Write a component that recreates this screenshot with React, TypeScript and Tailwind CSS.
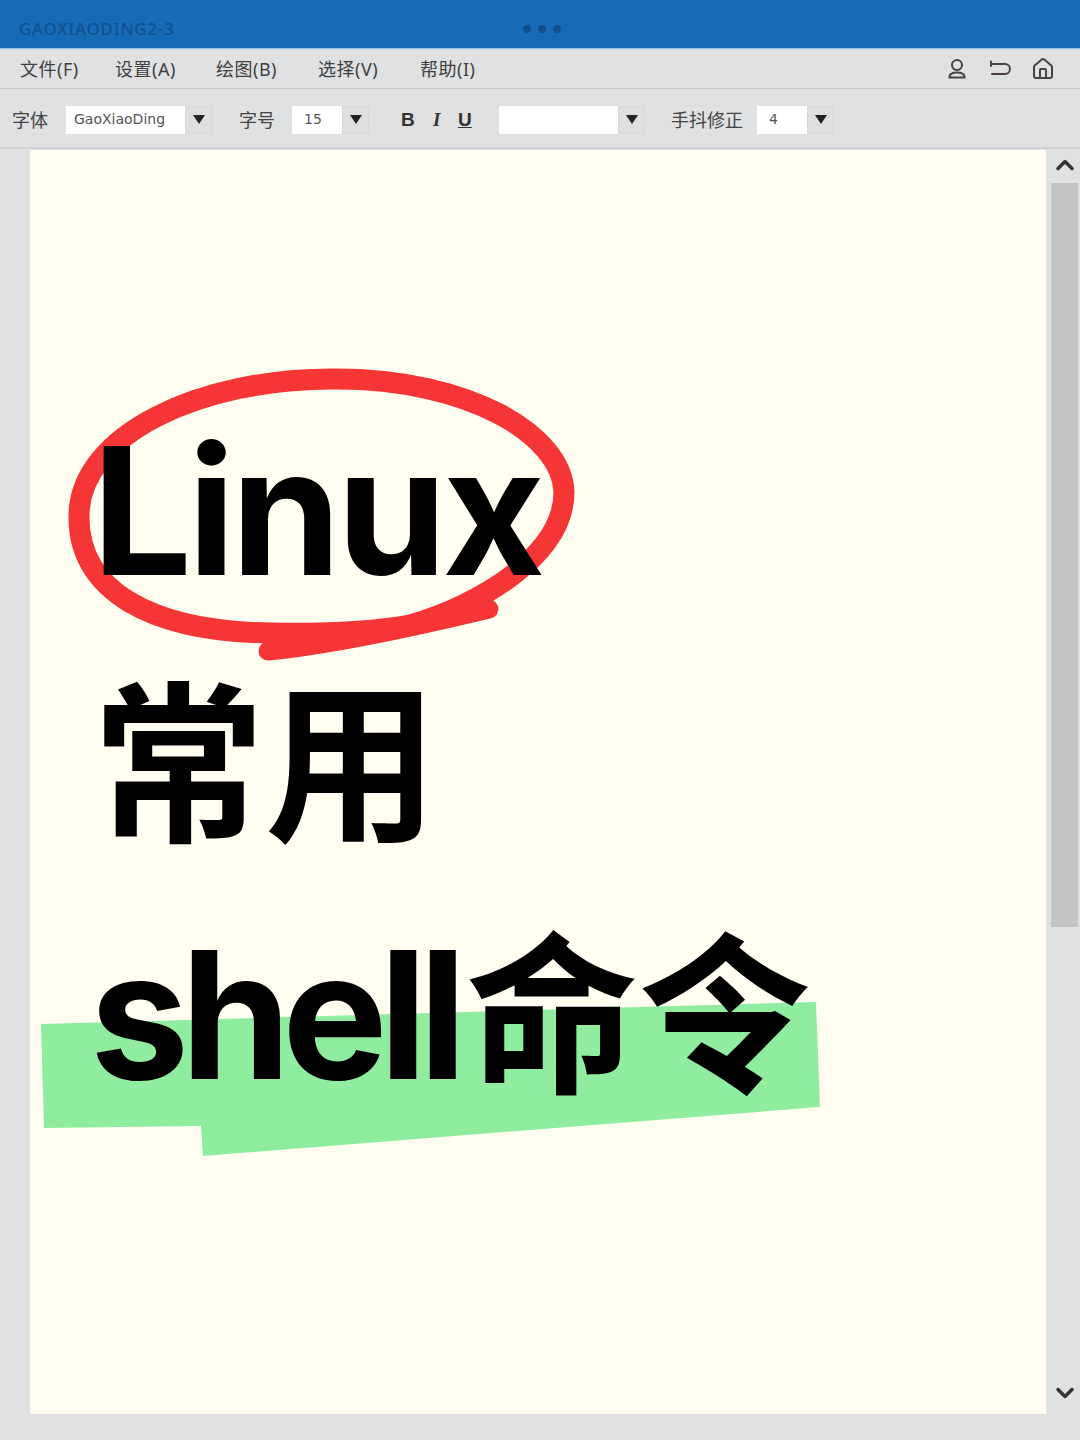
import { ChevronDown, ChevronUp, Home } from "lucide-react";

const UI_FONT = "font-['Noto_Sans','Noto_Sans_CJK_SC',sans-serif]";
const MENUS = [
  { label: "文件(F)", width: "w-[95px]" },
  { label: "设置(A)", width: "w-[101px]" },
  { label: "绘图(B)", width: "w-[102px]" },
  { label: "选择(V)", width: "w-[102px]" },
  { label: "帮助(I)", width: "w-[70px]" },
];

function Arrow() {
  return <span className="h-0 w-0 border-x-[6px] border-t-[9px] border-x-transparent border-t-[#222]" />;
}

function Select({ value, width, inset = "pl-[8px]" }: { value: string; width: string; inset?: string }) {
  return (
    <div className="flex h-[28px] items-stretch">
      <div className={`flex items-center bg-white font-['DejaVu_Sans',sans-serif] text-[14px] text-[#555] ${width} ${inset}`}>
        {value}
      </div>
      <div className="flex w-[27px] items-center justify-center border border-[#d6d8da] bg-[#dddfe1]">
        <Arrow />
      </div>
    </div>
  );
}

function Label({ children, className = "" }: { children: string; className?: string }) {
  return <span className={`text-[18px] leading-none text-[#444] ${className}`}>{children}</span>;
}

export default function App() {
  return (
    <div className={`flex h-[1440px] w-[1080px] flex-col overflow-hidden bg-[#dfe1e3] ${UI_FONT}`}>
      {/* Title bar */}
      <header className="relative flex h-[49px] shrink-0 items-center border-b border-[#8fc0ea] bg-[#176bb6] pl-[19px] pt-[10px]">
        <span className="text-[17px] font-medium tracking-[0.7px] text-[#12508f]">GAOXIAODING2-3</span>
        <div className="absolute left-[523px] top-[25px] flex gap-[7px]">
          <span className="h-[8px] w-[8px] rounded-full bg-[#0f4f8c]" />
          <span className="h-[8px] w-[8px] rounded-full bg-[#0f4f8c]" />
          <span className="h-[8px] w-[8px] rounded-full bg-[#0f4f8c]" />
        </div>
      </header>

      {/* Menu bar */}
      <nav className="flex h-[40px] shrink-0 items-center border-b border-[#c9cbcd] pl-[20px] pr-[25px]">
        {MENUS.map((m) => (
          <span key={m.label} className={`${m.width} text-[18px] leading-none tracking-[0.5px] text-[#3f3f3f]`}>
            {m.label}
          </span>
        ))}
        <div className="ml-auto flex items-center gap-[19px] text-[#4a4240]">
          <svg width="24" height="24" viewBox="0 0 24 24" fill="none" stroke="currentColor" strokeWidth="2">
            <circle cx="12" cy="8" r="5" />
            <path d="M4.5 20c0-2.500 2.500-4.500 7.500-4.500s7.500 2 7.500 4.500v.5h-15z" />
          </svg>
          <svg width="24" height="24" viewBox="0 0 24 24" fill="none" stroke="currentColor" strokeWidth="2" strokeLinecap="round">
            <path d="M3 7h14a4 4 0 0 1 0 10H4" />
            <path d="M3 4.500V9" />
          </svg>
          <Home size={24} strokeWidth={2} />
        </div>
      </nav>

      {/* Format toolbar */}
      <div className="flex h-[60px] shrink-0 items-center border-b-2 border-[#d0d2d4] pl-[12px] pt-[3px]">
        <Label className="mr-[18px]">字体</Label>
        <Select value="GaoXiaoDing" width="w-[119px]" />
        <Label className="ml-[27px] mr-[17px]">字号</Label>
        <Select value="15" width="w-[50px]" inset="pl-[12px]" />
        <div className="ml-[32px] mt-[2px] flex w-[98px] items-center text-[19px] text-[#333]">
          <span className="w-[32px] font-['Liberation_Sans'] font-bold">B</span>
          <span className="w-[25px] font-['Liberation_Serif'] font-bold italic">I</span>
          <span className="font-['Liberation_Sans'] font-bold underline">U</span>
        </div>
        <Select value="" width="w-[119px]" />
        <Label className="ml-[26px] mr-[14px]">手抖修正</Label>
        <Select value="4" width="w-[50px]" inset="pl-[12px]" />
      </div>

      {/* Workspace */}
      <main className="flex min-h-0 flex-1 pb-[26px]">
        <div className="relative ml-[30px] mt-[1px] w-[1016px] overflow-hidden bg-[#fffef1] font-['Inter','Noto_Sans_CJK_SC',sans-serif] font-[650] text-black">
          <svg className="absolute left-0 top-0" width="1016" height="1263" viewBox="0 0 1016 1263">
            <path d="M11 874 L786 852 L790 957 L173 1006 L171 976 L14 978 Z" fill="#90ec9f" />
            <path
              d="M380 475 C450 455 534 405 534 342 C532 285 440 229 306 229 C170 228 49 285 49 366 C48 440 120 482 242 483 C300 484 340 482 380 475"
              fill="none"
              stroke="#f63536"
              strokeWidth="21"
            />
            <path d="M238 501 C300 495 380 478 459 459" fill="none" stroke="#f63536" strokeWidth="19" strokeLinecap="round" />
          </svg>
          <div className="relative flex flex-col pl-[62px] pt-[261px]">
            <div className="h-[254px] text-[177px] leading-[200px] tracking-[-4.500px]">Linux</div>
            <div className="h-[250px] text-[173px] font-bold leading-[200px]">常用</div>
            <div className="h-[220px] whitespace-nowrap text-[177px] leading-[200px]">
              <span className="-ml-[2px] tracking-[-8.500px]">shell</span>
              <span className="ml-[8px] text-[172px] font-bold">命令</span>
            </div>
          </div>
        </div>

        {/* Scrollbar */}
        <aside className="ml-[5px] flex w-[27px] flex-col items-center">
          <ChevronUp size={28} strokeWidth={3} className="mt-[2px] text-[#333]" />
          <div className="mt-[4px] h-[744px] w-full bg-[#c3c4c5]" />
          <ChevronDown size={28} strokeWidth={3} className="mb-[7px] mt-auto text-[#333]" />
        </aside>
      </main>
    </div>
  );
}
